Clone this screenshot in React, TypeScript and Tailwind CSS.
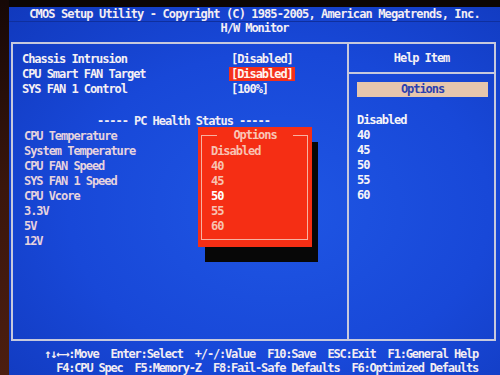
import React from "react"

// BIOS "H/W Monitor" screen, photographed
const settings = [
  { label: "Chassis Intrusion", value: "[Disabled]", active: false },
  { label: "CPU Smart FAN Target", value: "[Disabled]", active: true },
  { label: "SYS FAN 1 Control", value: "[100%]", active: false },
]

const health = [
  "CPU Temperature",
  "System Temperature",
  "CPU FAN Speed",
  "SYS FAN 1 Speed",
  "CPU Vcore",
  "3.3V",
  "5V",
  "12V",
]

const options = ["Disabled", "40", "45", "50", "55", "60"]

const App = () => {
  return (
    <div className="w-[500px] h-[375px] overflow-hidden flex bg-[#120604] font-['DejaVu_Sans_Mono','Liberation_Mono',monospace] font-bold text-[12px] tracking-[-1.05px] leading-[15px] whitespace-pre">
      {/* monitor bezel, left */}
      <div className="w-[9px] shrink-0 bg-gradient-to-b from-[#160806] via-[#3a160c] to-[#4c1e10]" />

      <div className="flex-1 flex flex-col">
        {/* bezel, top */}
        <div className="h-[7px] bg-[#0c0604]" />

        {/* screen */}
        <div className="flex-1 flex flex-col bg-[radial-gradient(ellipse_at_55%_55%,#1f56e4_0%,#1848d8_55%,#1139bd_100%)]">
          {/* Title */}
          <div className="h-[15px] leading-[14px] text-center text-[#f3edf3] tracking-[-0.88px] border-b border-[#0f2f9e]">
            CMOS Setup Utility - Copyright (C) 1985-2005, American Megatrends, Inc.
          </div>
          <div className="h-[13px] leading-[13px] text-center text-[#f3eef5]">H/W Monitor</div>

          {/* Main box */}
          <div className="relative mt-[7px] ml-[2px] mr-[4px] h-[299px] border-2 border-[#c7c9dd] flex">
            {/* Left panel */}
            <div className="w-[336px] shrink-0 border-r-2 border-[#c7c9dd] pt-[8px] pl-[9px]">
              {settings.map((s) => (
                <div key={s.label} className="flex h-[15px]">
                  <div className="w-[209px] text-[#f5f0f4]">{s.label}</div>
                  <div
                    className={
                      s.active
                        ? "-ml-[2px] px-[2px] h-[14px] leading-[14px] bg-[#f4301a] text-[#fff4f0]"
                        : "text-[#f5f0f4]"
                    }
                  >
                    {s.value}
                  </div>
                </div>
              ))}
              <div className="h-[17px]" />
              <div className="h-[15px] pl-[75px] text-[#f1edf5]">----- PC Health Status -----</div>
              {health.map((h) => (
                <div key={h} className="h-[15px] pl-[2px] text-[#e6d3de]">
                  {h}
                </div>
              ))}
            </div>

            {/* Right panel */}
            <div className="flex-1 flex flex-col">
              <div className="h-[30px] leading-[28px] border-b-2 border-[#c7c9dd] text-center text-[#f5f1f6]">
                Help Item
              </div>
              <div className="mt-[8px] ml-[8px] mr-[6px] h-[15px] bg-[#e6c6ad] text-center text-[#2c3fae]">
                Options
              </div>
              <div className="mt-[16px] pl-[8px] text-[#f7f4f8]">
                {options.map((o) => (
                  <div key={o} className="h-[15px]">
                    {o}
                  </div>
                ))}
              </div>
            </div>

            {/* Options popup shadow */}
            <div className="absolute left-[192px] top-[98px] w-[113px] h-[120px] bg-[#070707]" />

            {/* Options popup */}
            <div className="absolute left-[185px] top-[83px] w-[114px] h-[120px] bg-[#f52e14]">
              <div className="absolute left-[3px] top-[8px] right-[4px] bottom-[7px] border border-[#f7b2a2]" />
              <div className="absolute left-0 right-0 top-[1px] flex justify-center">
                <span className="px-[16px] h-[15px] bg-[#f52e14] text-[#f9c5b6]">Options</span>
              </div>
              <div className="relative pt-[17px] pl-[13px]">
                {options.map((o) => (
                  <div key={o} className={o === "50" ? "h-[15px] text-[#ffffff]" : "h-[15px] text-[#f8c2b2]"}>
                    {o}
                  </div>
                ))}
              </div>
            </div>
          </div>

          {/* Key help */}
          <div className="mt-[6px] pr-[22px] text-right text-[#f2ecf2] leading-[14px] tracking-[-1.2px]">
            <div className="h-[14px]">↑↓←→:Move  Enter:Select  +/-/:Value  F10:Save  ESC:Exit  F1:General Help</div>
            <div className="h-[14px]">F4:CPU Spec  F5:Memory-Z  F8:Fail-Safe Defaults  F6:Optimized Defaults</div>
          </div>
        </div>
      </div>
    </div>
  )
}

export default App
